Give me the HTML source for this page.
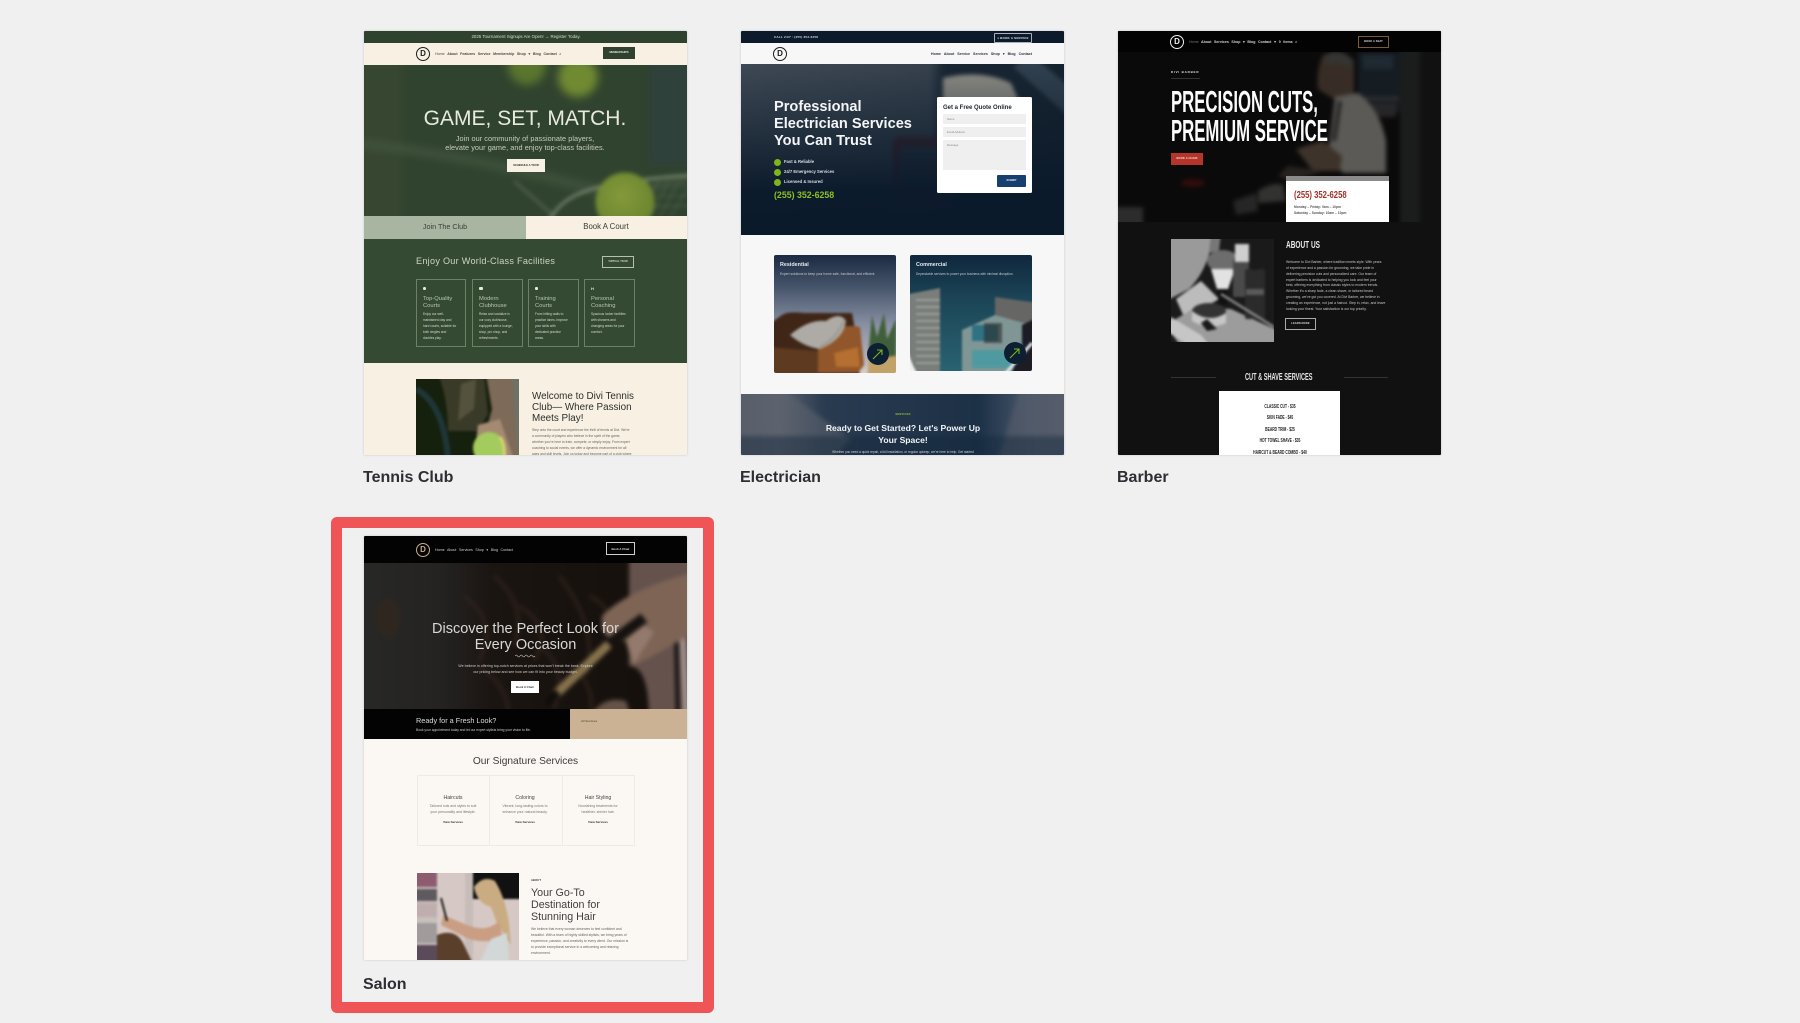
<!DOCTYPE html>
<html lang="en"><head><meta charset="utf-8"><title>Layouts</title>
<style>
html,body{margin:0;padding:0;background:#f0f0f1;width:1800px;height:1023px;overflow:hidden;font-family:"Liberation Sans",sans-serif}
.card{position:absolute;width:323px;height:424px;overflow:hidden;filter:blur(.35px);box-shadow:0 0 2px rgba(0,0,0,.18);border-radius:1px}
.b{position:absolute}
.t{position:absolute;white-space:nowrap;line-height:0}
.c{transform:translateX(-50%)}
.l{position:absolute;font:bold 16px "Liberation Sans",sans-serif;color:#2d2d33;line-height:20px;white-space:nowrap}
svg{position:absolute;display:block}
.ph{position:absolute;overflow:hidden}
.logo{position:absolute;width:14px;height:14px;box-sizing:border-box;border:1.4px solid;border-radius:50%;text-align:center;font:bold 8px/11.5px "Liberation Sans",sans-serif}
.nar{transform-origin:0 50%;font-weight:bold}
.navt{font-size:3.6px}
</style></head><body>

<!-- TENNIS -->
<div class="card" style="left:364px;top:31px;background:#f7f0e3">
 <div class="b" style="left:0;top:0;width:323px;height:12px;background:#2f4230"></div>
 <div class="t c" style="left:162px;top:6px;font-size:4.4px;color:#d8dccb">2025 Tournament Signups Are Open! → Register Today.</div>
 <div class="logo" style="left:52px;top:16px;color:#1d1d1d;border-color:#1d1d1d">D</div>
 <div class="t navt" style="left:71px;top:23px;color:#4a4a40;word-spacing:1.6px">Home <b>About Features Service Membership Shop ▾ Blog Contact ⌕</b></div>
 <div class="b" style="left:239px;top:16px;width:32px;height:12px;background:#2f4230"></div>
 <div class="t c" style="left:255px;top:22px;font-size:2.6px;font-weight:bold;color:#dfe3d3">MEMBERSHIPS</div>
 <div class="ph" style="left:0;top:34px;width:323px;height:151px">
 <svg style="left:-10px;top:-10px;filter:blur(2px)" width="343" height="171" viewBox="-10 24 343 171">
  <defs><filter id="f1" x="-50%" y="-50%" width="200%" height="200%"><feGaussianBlur stdDeviation="4"/></filter>
  <radialGradient id="bg1" cx=".45" cy=".4" r=".6"><stop offset="0" stop-color="#84993a"/><stop offset="1" stop-color="#6a8430"/></radialGradient></defs>
  <rect x="-10" y="24" width="343" height="171" fill="#30432e"/>
  <rect x="-10" y="24" width="50" height="171" fill="#3a4a33" opacity=".6" filter="url(#f1)"/>
  <rect x="285" y="24" width="48" height="110" fill="#2e4044" opacity=".6" filter="url(#f1)"/>
  <g filter="url(#f1)"><circle cx="163" cy="35" r="19" fill="#5a742e"/><circle cx="214" cy="46" r="20" fill="#6f8a33"/></g>
  <path d="M-10 112 C70 120 140 135 205 152 C250 164 250 160 333 148" stroke="#4a5c44" stroke-width="8" fill="none" filter="url(#f1)" opacity=".7"/>
  <g fill="none" stroke="#8e9b85" stroke-width="2"><path d="M185 190 C200 160 235 150 333 144"/><path d="M150 150 L190 185" opacity=".45"/></g>
  <g stroke="#74857a" stroke-width=".7" opacity=".7"><path d="M285 150 L265 188M295 150 L275 188M305 150 L285 188M315 150 L295 188M325 155 L305 188M278 165 L333 165M284 175 L333 175"/></g>
  <circle cx="261" cy="171" r="29.5" fill="url(#bg1)"/>
 </svg></div>
 <div class="t c" style="left:161px;top:88px;font-size:21px;color:#e8eae0">GAME, SET, MATCH.</div>
 <div class="t c" style="left:161px;top:108px;font-size:7.3px;color:#c8cdbb;letter-spacing:.05px">Join our community of passionate players,</div>
 <div class="t c" style="left:161px;top:117px;font-size:7.3px;color:#c8cdbb;letter-spacing:.05px">elevate your game, and enjoy top-class facilities.</div>
 <div class="b" style="left:143px;top:128px;width:38px;height:13px;background:#f7f0e3"></div>
 <div class="t c" style="left:162px;top:135px;font-size:2.7px;font-weight:bold;color:#2a2a2a">SCHEDULE A TOUR</div>
 <div class="b" style="left:0;top:185px;width:161.5px;height:23px;background:#a8b5a0"></div>
 <div class="t c" style="left:81px;top:195.5px;font-size:7.2px;color:#3a4236">Join The Club</div>
 <div class="t c" style="left:242px;top:195.5px;font-size:7.8px;color:#3a3a36">Book A Court</div>
 <div class="b" style="left:0;top:208px;width:323px;height:124px;background:#344a32"></div>
 <div class="t" style="left:52px;top:229.5px;font-size:9.1px;letter-spacing:.28px;color:#cfd4c0">Enjoy Our World-Class Facilities</div>
 <div class="b" style="left:238px;top:225px;width:32px;height:12px;box-sizing:border-box;border:.8px solid #b7c0aa"></div>
 <div class="t c" style="left:254px;top:231px;font-size:2.6px;font-weight:bold;color:#d5d9c9">VIRTUAL TOUR</div>

 <div class="b" style="left:52px;top:248px;width:50px;height:68px;box-sizing:border-box;border:.7px solid #6f8064"></div>
 <div class="b" style="left:108px;top:248px;width:51px;height:68px;box-sizing:border-box;border:.7px solid #6f8064"></div>
 <div class="b" style="left:164px;top:248px;width:51px;height:68px;box-sizing:border-box;border:.7px solid #6f8064"></div>
 <div class="b" style="left:220px;top:248px;width:51px;height:68px;box-sizing:border-box;border:.7px solid #6f8064"></div>
 <div class="b" style="left:59px;top:256px;width:2.5px;height:2.5px;background:#e6e8da;border-radius:50%"></div>
 <div class="b" style="left:115px;top:256px;width:4px;height:3px;background:#e6e8da;border-radius:1px"></div>
 <div class="b" style="left:171px;top:256px;width:3px;height:3px;background:#e6e8da;border-radius:1px"></div>
 <div class="t" style="left:227px;top:257.5px;font-size:4px;font-weight:bold;color:#e6e8da">H</div>
 <div style="position:absolute;left:0;top:0;color:#bcc4ac;font-size:5.8px">
  <div class="t" style="left:59px;top:268px">Top-Quality</div><div class="t" style="left:59px;top:275px">Courts</div>
  <div class="t" style="left:115px;top:268px">Modern</div><div class="t" style="left:115px;top:275px">Clubhouse</div>
  <div class="t" style="left:171px;top:268px">Training</div><div class="t" style="left:171px;top:275px">Courts</div>
  <div class="t" style="left:227px;top:268px">Personal</div><div class="t" style="left:227px;top:275px">Coaching</div>
 </div>
 <div style="position:absolute;left:0;top:0;color:#d6dbc9;font-size:3.2px">
  <div class="t" style="left:59px;top:283px">Enjoy our well-</div><div class="t" style="left:59px;top:289px">maintained clay and</div><div class="t" style="left:59px;top:295px">hard courts, suitable for</div><div class="t" style="left:59px;top:301px">both singles and</div><div class="t" style="left:59px;top:307px">doubles play.</div>
  <div class="t" style="left:115px;top:283px">Relax and socialize in</div><div class="t" style="left:115px;top:289px">our cozy clubhouse,</div><div class="t" style="left:115px;top:295px">equipped with a lounge,</div><div class="t" style="left:115px;top:301px">shop, pro shop, and</div><div class="t" style="left:115px;top:307px">refreshments.</div>
  <div class="t" style="left:171px;top:283px">From hitting walls to</div><div class="t" style="left:171px;top:289px">practice lanes, improve</div><div class="t" style="left:171px;top:295px">your skills with</div><div class="t" style="left:171px;top:301px">dedicated practice</div><div class="t" style="left:171px;top:307px">areas.</div>
  <div class="t" style="left:227px;top:283px">Spacious locker facilities</div><div class="t" style="left:227px;top:289px">with showers and</div><div class="t" style="left:227px;top:295px">changing areas for your</div><div class="t" style="left:227px;top:301px">comfort.</div>
 </div>
 <div class="ph" style="left:52px;top:348px;width:103px;height:76px">
 <svg style="left:-5px;top:-5px;filter:blur(1.3px)" width="113" height="86" viewBox="-5 -5 113 86">
  <rect x="-5" y="-5" width="113" height="86" fill="#15200d"/>
  <rect x="96" y="-5" width="12" height="86" fill="#6f7166"/>
  <path d="M22 -5 L68 -5 L72 35 L62 52 L32 52 Q32 20 22 -5Z" fill="#3a3a28"/>
  <path d="M45 5 L60 0 L58 30 L42 42Z" fill="#54523c"/>
  <path d="M70 -5 L96 -5 L100 55 L103 81 L88 81 L72 45 L76 30Z" fill="#7d6a58"/>
  <path d="M0 10 Q28 25 32 81" stroke="#1f3638" stroke-width="6" fill="none"/>
  <path d="M62 46 L84 40 L98 81 L58 81Z" fill="#a58a72"/>
  <circle cx="73" cy="69" r="16" fill="#a4cb5e"/>
  <path d="M84 58 Q90 66 88 81" stroke="#d8d66e" stroke-width="3" fill="none"/>
 </svg></div>
 <div style="position:absolute;left:0;top:0;color:#2d2f2b;font-size:9.85px">
  <div class="t" style="left:168px;top:366px">Welcome to Divi Tennis</div><div class="t" style="left:168px;top:377px">Club— Where Passion</div><div class="t" style="left:168px;top:387.5px">Meets Play!</div>
 </div>
 <div style="position:absolute;left:0;top:0;color:#66665c;font-size:3.3px">
  <div class="t" style="left:168px;top:399px">Step onto the court and experience the thrill of tennis at Divi. We're</div>
  <div class="t" style="left:168px;top:405px">a community of players who believe in the spirit of the game,</div>
  <div class="t" style="left:168px;top:411px">whether you're here to train, compete, or simply enjoy. From expert</div>
  <div class="t" style="left:168px;top:417px">coaching to social events, we offer a dynamic environment for all</div>
  <div class="t" style="left:168px;top:423px">ages and skill levels. Join us today and become part of a club where</div>
 </div>
</div>
<div class="l" style="left:363px;top:468px">Tennis Club</div>

<!-- ELECTRICIAN -->
<div class="card" style="left:741px;top:31px;background:#f7f7f8">
 <div class="b" style="left:0;top:0;width:323px;height:12px;background:#0c1a2c"></div>
 <div class="t" style="left:33px;top:5.5px;font-size:3.1px;font-weight:bold;color:#d8dde2;letter-spacing:.2px">CALL 24/7 : (255) 352-6258</div>
 <div class="b" style="left:253px;top:1.5px;width:38px;height:10px;box-sizing:border-box;border:.8px solid #a7b2bd;border-radius:1px"></div>
 <div class="t c" style="left:272px;top:6.5px;font-size:3px;font-weight:bold;color:#dfe3e7;letter-spacing:.2px">♦ BOOK A SERVICE</div>
 <div class="logo" style="left:32px;top:16px;color:#1a1a1a;border-color:#1a1a1a">D</div>
 <div class="t navt" style="right:32px;top:23px;color:#2c3440;font-weight:bold;word-spacing:2px">Home About Service Services Shop ▾ Blog Contact</div>
 <div class="ph" style="left:0;top:33px;width:323px;height:171px">
 <svg style="left:-10px;top:-10px;filter:blur(2px)" width="343" height="191" viewBox="-10 23 343 191">
  <defs>
  <linearGradient id="g2" x1="0" y1="0" x2="1" y2="0"><stop offset="0" stop-color="#434d58"/><stop offset=".58" stop-color="#39444f"/><stop offset=".62" stop-color="#1a2634"/><stop offset="1" stop-color="#17242f"/></linearGradient>
  <linearGradient id="g3" x1="0" y1="0" x2="0" y2="1"><stop offset="0" stop-color="#0b1a2b" stop-opacity="0"/><stop offset=".72" stop-color="#0b1a2b" stop-opacity=".98"/><stop offset="1" stop-color="#0b1a2b"/></linearGradient></defs>
  <rect x="-10" y="23" width="343" height="191" fill="url(#g2)"/>
  <path d="M202 47 Q240 38 270 52 L280 75 L202 70Z" fill="#9a978d"/>
  <path d="M272 36 L333 90 L333 60 L290 23Z" fill="#344352"/>
  <rect x="152" y="106" width="60" height="72" rx="6" fill="#47262c"/>
  <rect x="160" y="116" width="38" height="42" fill="#2c3843"/>
  <rect x="-10" y="23" width="343" height="191" fill="url(#g3)"/>
 </svg></div>
 <div style="position:absolute;left:0;top:0;color:#f4f5f6;font-size:14.6px;font-weight:bold">
  <div class="t" style="left:33px;top:75.5px">Professional</div><div class="t" style="left:33px;top:92.5px">Electrician Services</div><div class="t" style="left:33px;top:110px">You Can Trust</div>
 </div>
 <div class="b" style="left:33px;top:127.5px;width:7px;height:7px;border-radius:50%;background:#7fb51a"></div>
 <div class="b" style="left:33px;top:137.5px;width:7px;height:7px;border-radius:50%;background:#7fb51a"></div>
 <div class="b" style="left:33px;top:147.5px;width:7px;height:7px;border-radius:50%;background:#7fb51a"></div>
 <div style="position:absolute;left:0;top:0;color:#d9dde2;font-size:4.2px;font-weight:bold">
  <div class="t" style="left:43px;top:131px">Fast &amp; Reliable</div><div class="t" style="left:43px;top:141px">24/7 Emergency Services</div><div class="t" style="left:43px;top:151px">Licensed &amp; Insured</div>
 </div>
 <div class="t" style="left:33px;top:164px;font-size:8.8px;font-weight:bold;color:#8dbf1f">(255) 352-6258</div>
 <div class="b" style="left:196px;top:66px;width:95px;height:96px;background:#fff;border-radius:1.5px"></div>
 <div class="t" style="left:202px;top:76.5px;font-size:6px;font-weight:bold;color:#1d2530">Get a Free Quote Online</div>
 <div class="b" style="left:202px;top:83px;width:83px;height:10px;background:#efefef"></div>
 <div class="b" style="left:202px;top:96px;width:83px;height:10px;background:#efefef"></div>
 <div class="b" style="left:202px;top:109px;width:83px;height:30px;background:#efefef"></div>
 <div style="position:absolute;left:0;top:0;color:#8a8a8a;font-size:2.8px">
  <div class="t" style="left:206px;top:88px">Name</div><div class="t" style="left:206px;top:101px">Email Address</div><div class="t" style="left:206px;top:114px">Message</div>
 </div>
 <div class="b" style="left:256px;top:144px;width:29px;height:12px;background:#17406f;border-radius:1px"></div>
 <div class="t c" style="left:270.5px;top:150px;font-size:2.7px;font-weight:bold;color:#e5e9ee">SUBMIT</div>

 <div class="ph" style="left:33px;top:224px;width:122px;height:118px;border-radius:2px">
 <svg style="left:-6px;top:-6px;filter:blur(1.3px)" width="134" height="130" viewBox="-6 -6 134 130">
  <defs><linearGradient id="g4" x1="0" y1="0" x2="0" y2="1"><stop offset="0" stop-color="#13233a"/><stop offset=".3" stop-color="#48566c"/><stop offset=".6" stop-color="#8c93a6"/><stop offset=".85" stop-color="#b5b2b8"/><stop offset="1" stop-color="#e4dcd4"/></linearGradient></defs>
  <rect x="-6" y="-6" width="134" height="130" fill="url(#g4)"/>
  <path d="M8 60 Q14 56 30 58 L78 58 L82 80 L86 124 L-6 124 L-6 70Z" fill="#3f2617"/>
  <path d="M-6 92 L44 96 L44 124 L-6 124Z" fill="#5e3a20"/>
  <path d="M44 92 Q60 66 86 72 L90 110 L84 118 L44 118Z" fill="#91562a"/>
  <path d="M60 98 L84 92 L86 112 L62 112Z" fill="#b56f30"/>
  <path d="M16 80 Q35 64 52 66 Q66 56 72 66 Q70 84 46 94 Q30 92 16 80Z" fill="#aeaaa5"/>
  <path d="M46 92 Q62 84 70 66" stroke="#8d8880" stroke-width="1" fill="none"/>
  <path d="M95 92 L98 60 L103 82 L110 58 L113 84 L122 64 L122 104 L95 104Z" fill="#3f5f3a"/>
  <path d="M95 104 L128 100 L128 124 L93 124Z" fill="#c2a268"/>
 </svg></div>
 <div class="b" style="left:126px;top:312px;width:22px;height:22px;border-radius:50%;background:#0c1f33"></div>
 <svg style="left:126px;top:312px" width="22" height="22" viewBox="0 0 22 22"><path d="M6 16 L15 7 M10 7 H15 V12" stroke="#7fb51a" stroke-width="1.1" fill="none"/></svg>
 <div class="ph" style="left:169px;top:224px;width:122px;height:116px;border-radius:2px">
 <svg style="left:-6px;top:-6px;filter:blur(1.1px)" width="134" height="128" viewBox="-6 -6 134 128">
  <defs><linearGradient id="g5" x1="0" y1="0" x2="0" y2="1"><stop offset="0" stop-color="#0f2339"/><stop offset=".4" stop-color="#1c4658"/><stop offset="1" stop-color="#2a6573"/></linearGradient></defs>
  <rect x="-6" y="-6" width="134" height="128" fill="url(#g5)"/>
  <path d="M-6 40 L30 33 L30 122 L-6 122Z" fill="#7a7e7b"/>
  <path d="M-6 80 Q0 110 10 122 L-6 122Z" fill="#f0f0ee"/>
  <g stroke="#d2d2c8" stroke-width="1.3" opacity=".55"><path d="M6 45H30M6 52H30M6 59H30M6 66H30M6 73H30M6 80H30M6 87H30M6 94H30M6 101H30M6 108H30"/></g>
  <path d="M52 75 L85 60 L128 65 L128 122 L52 122Z" fill="#7f9695"/>
  <path d="M85 42 L128 48 L128 72 L85 60Z" fill="#666664"/>
  <rect x="62" y="70" width="26" height="16" fill="#2f7283"/><rect x="74" y="68" width="18" height="20" fill="#2b2b2b" opacity=".6"/><rect x="62" y="95" width="50" height="18" fill="#4f9aa0"/>
  <path d="M112 70 L128 62 L128 122 L100 122 L112 92Z" fill="#1b1c24"/>
  <path d="M96 118 L122 88" stroke="#e8e8e4" stroke-width="3"/>
 </svg></div>
 <div class="b" style="left:263px;top:311px;width:22px;height:22px;border-radius:50%;background:#0c1f33"></div>
 <svg style="left:263px;top:311px" width="22" height="22" viewBox="0 0 22 22"><path d="M6 16 L15 7 M10 7 H15 V12" stroke="#7fb51a" stroke-width="1.1" fill="none"/></svg>
 <div class="t" style="left:39px;top:234px;font-size:5.4px;font-weight:bold;color:#e6e9ee">Residential</div>
 <div class="t" style="left:39px;top:243px;font-size:3.3px;color:#c2c8d0">Expert solutions to keep your home safe, functional, and efficient.</div>
 <div class="t" style="left:175px;top:234px;font-size:5.4px;font-weight:bold;color:#e6e9ee">Commercial</div>
 <div class="t" style="left:175px;top:243px;font-size:3.2px;color:#c2c8d0">Dependable services to power your business with minimal disruption.</div>
 <div class="ph" style="left:0;top:363px;width:323px;height:61px">
 <svg style="left:-10px;top:-10px;filter:blur(2.5px)" width="343" height="81" viewBox="-10 -10 343 81">
  <defs><linearGradient id="g6" x1="0" y1="0" x2="1" y2="0"><stop offset="0" stop-color="#4c5360"/><stop offset=".14" stop-color="#5c626e"/><stop offset=".27" stop-color="#2a3b50"/><stop offset=".72" stop-color="#1c3046"/><stop offset=".87" stop-color="#47566a"/><stop offset="1" stop-color="#565c68"/></linearGradient></defs>
  <rect x="-10" y="-10" width="343" height="81" fill="url(#g6)"/>
  <path d="M35 -10 L110 45 L85 71 L-10 71 L-10 -10Z" fill="#5f6570" opacity=".55"/>
  <path d="M280 -10 L255 71 L333 71 L333 -10Z" fill="#585e6a" opacity=".6"/>
  <rect x="-10" y="42" width="343" height="29" fill="#14273c" opacity=".45"/>
 </svg></div>
 <div class="t c" style="left:162px;top:384px;font-size:2.7px;font-weight:bold;color:#9ac02a;letter-spacing:.2px">SERVICES</div>
 <div class="t c" style="left:162px;top:397px;font-size:8.6px;font-weight:bold;color:#f3f4f5">Ready to Get Started? Let's Power Up</div>
 <div class="t c" style="left:162px;top:408.5px;font-size:8.6px;font-weight:bold;color:#f3f4f5">Your Space!</div>
 <div class="t c" style="left:162px;top:421px;font-size:3.2px;color:#cdd2d8">Whether you need a quick repair, a full installation, or regular upkeep, we're here to help. Get started</div>
</div>
<div class="l" style="left:740px;top:468px">Electrician</div>

<!-- BARBER -->
<div class="card" style="left:1118px;top:31px;background:#111">
 <div class="ph" style="left:0;top:21px;width:323px;height:170px">
 <svg style="left:-10px;top:-10px;filter:blur(2px)" width="343" height="190" viewBox="-10 11 343 190">
  <rect x="-10" y="11" width="343" height="190" fill="#0b0a0a"/>
  <rect x="282" y="11" width="20" height="190" fill="#1b1c1c"/>
  <rect x="302" y="11" width="31" height="190" fill="#111"/>
  <rect x="240" y="21" width="42" height="60" fill="#151c22"/>
  <rect x="245" y="24" width="30" height="14" fill="#1f2932"/>
  <rect x="245" y="66" width="36" height="3" fill="#333"/>
  <rect x="250" y="72" width="28" height="14" fill="#262628"/>
  <path d="M205 24 Q225 18 236 30 L236 62 Q232 72 222 72 L200 58 Q198 40 205 24Z" fill="#372d26"/>
  <path d="M208 23 Q224 16 236 30 L232 36 Q218 30 208 34Z" fill="#343432"/>
  <path d="M217 66 L240 62 Q262 78 268 110 L268 142 L225 142 L210 125Z" fill="#5b5a56"/>
  <path d="M222 70 L216 110" stroke="#222" stroke-width="4"/>
  <path d="M178 118 L205 110 L224 125 L222 140 L195 140Z" fill="#3e332b"/>
  <path d="M170 135 L205 140 L175 150 L160 145Z" fill="#26221f"/>
  <path d="M140 160 Q155 150 165 154 L168 170 L140 172Z" fill="#323230"/>
  <rect x="-10" y="176" width="35" height="25" fill="#2c2c2c"/>
  <path d="M115 170 L138 162 L140 180 L118 184Z" fill="#262626"/>
  <ellipse cx="75" cy="152" rx="12" ry="4" fill="#300d0b"/>
 </svg></div>
 <div class="b" style="left:0;top:0;width:323px;height:21px;background:#030303"></div>
 <div class="logo" style="left:52px;top:4px;color:#f2f2f2;border-color:#f2f2f2">D</div>
 <div class="t navt" style="left:71px;top:11px;color:#d4d4d4;font-weight:bold;word-spacing:1.6px"><span style="color:#777;font-weight:normal">Home</span> About Services Shop ▾ Blog Contact ♥ 0 items ⌕</div>
 <div class="b" style="left:240px;top:5px;width:31px;height:12px;box-sizing:border-box;border:.8px solid #7a5c3a"></div>
 <div class="t c" style="left:255.5px;top:11px;font-size:2.6px;font-weight:bold;color:#dcdcdc;letter-spacing:.1px">BOOK A SEAT</div>
 <div class="t" style="left:53px;top:40.5px;font-size:3px;font-weight:bold;color:#e8e8e8;letter-spacing:.8px">DIVI BARBER</div>
 <div class="b" style="left:53px;top:47px;width:29px;height:.6px;background:#333"></div>
 <div class="t nar" style="left:53px;top:71px;font-size:31px;color:#fbfbfb;transform:scaleX(.54)">PRECISION CUTS,</div>
 <div class="t nar" style="left:53px;top:99.5px;font-size:31px;color:#fbfbfb;transform:scaleX(.54)">PREMIUM SERVICE</div>
 <div class="b" style="left:53px;top:122px;width:32px;height:12px;background:#b5352a"></div>
 <div class="t c" style="left:69px;top:128px;font-size:2.7px;font-weight:bold;color:#f0dcd8;letter-spacing:.1px">BOOK A CHAIR</div>
 <div class="b" style="left:168px;top:145px;width:103px;height:46px;background:#fff"></div>
 <div class="b" style="left:168px;top:145px;width:103px;height:4.5px;background:#8a8a8a"></div>
 <div class="t nar" style="left:176px;top:164.5px;font-size:10px;color:#a3332a;transform:scaleX(.77)">(255) 352-6258</div>
 <div class="t" style="left:176px;top:175.5px;font-size:3.3px;font-weight:bold;color:#555">Monday – Friday: 9am – 10pm</div>
 <div class="t" style="left:176px;top:181.5px;font-size:3.3px;font-weight:bold;color:#555">Saturday – Sunday: 10am – 10pm</div>

 <div class="ph" style="left:53px;top:208px;width:103px;height:103px">
 <svg style="left:-5px;top:-5px;filter:blur(1.2px)" width="113" height="113" viewBox="-5 -5 113 113">
  <rect x="-5" y="-5" width="113" height="113" fill="#1a1a1a"/>
  <path d="M-5 -5 L42 -5 Q38 30 18 50 L-5 62Z" fill="#9a9a9a"/>
  <path d="M40 -5 L50 -5 L48 12 L38 14Z" fill="#777"/>
  <path d="M5 60 L30 42 L48 60 L14 80Z" fill="#bcbcbc"/>
  <path d="M-5 86 L25 68 L60 70 L108 92 L108 108 L10 108Z" fill="#9c9c9c"/>
  <path d="M0 78 L-5 92 L20 108 L40 108 L30 96Z" fill="#c6c6c6"/>
  <ellipse cx="52" cy="22" rx="16" ry="11" fill="#6d6d6d"/>
  <path d="M40 30 L64 30 L57 50 L46 50Z" fill="#e2e2e2"/>
  <rect x="47" y="50" width="9" height="16" fill="#111"/>
  <rect x="62" y="20" width="16" height="38" fill="#4a4a4a"/><rect x="64" y="5" width="14" height="18" fill="#cfcfcf"/>
  <rect x="74" y="30" width="20" height="50" rx="2" fill="#2b2b2b"/><rect x="81" y="15" width="6" height="16" fill="#1a1a1a"/>
  <rect x="75" y="50" width="18" height="6" fill="#5a5a5a"/>
  <ellipse cx="38" cy="72" rx="17" ry="8" fill="#333"/><path d="M21 72 Q38 85 55 74 L55 84 Q38 92 21 82Z" fill="#c6c6c6"/>
  <path d="M50 55 L103 88" stroke="#8a8a8a" stroke-width="2.5"/>
  <path d="M36 80 L46 90 L36 92 L30 84Z" fill="#1a1a1a"/>
 </svg></div>
 <div class="t nar" style="left:168px;top:214px;font-size:10.5px;color:#e8e8e8;transform:scaleX(.62)">ABOUT US</div>
 <div style="position:absolute;left:0;top:0;color:#c6c6c6;font-size:3.4px">
  <div class="t" style="left:168px;top:231px">Welcome to Divi Barber, where tradition meets style. With years</div>
  <div class="t" style="left:168px;top:237px">of experience and a passion for grooming, we take pride in</div>
  <div class="t" style="left:168px;top:242.6px">delivering precision cuts and personalized care. Our team of</div>
  <div class="t" style="left:168px;top:248.5px">expert barbers is dedicated to helping you look and feel your</div>
  <div class="t" style="left:168px;top:254.3px">best, offering everything from classic styles to modern trends.</div>
  <div class="t" style="left:168px;top:260.2px">Whether it's a sharp fade, a clean shave, or tailored beard</div>
  <div class="t" style="left:168px;top:266px">grooming, we've got you covered. At Divi Barber, we believe in</div>
  <div class="t" style="left:168px;top:271.8px">creating an experience, not just a haircut. Step in, relax, and leave</div>
  <div class="t" style="left:168px;top:277.6px">looking your finest. Your satisfaction is our top priority.</div>
 </div>
 <div class="b" style="left:167px;top:287px;width:31px;height:12px;box-sizing:border-box;border:.8px solid #aaa"></div>
 <div class="t c" style="left:182.5px;top:293px;font-size:2.6px;font-weight:bold;color:#d8d8d8;letter-spacing:.1px">LEARN MORE</div>
 <div class="b" style="left:53px;top:346px;width:45px;height:.7px;background:#333"></div>
 <div class="b" style="left:226px;top:346px;width:44px;height:.7px;background:#333"></div>
 <div class="t nar" style="left:127px;top:346px;font-size:10.5px;color:#e4e4e4;transform:scaleX(.535)">CUT &amp; SHAVE SERVICES</div>
 <div class="b" style="left:101px;top:360px;width:121px;height:64px;background:#fff"></div>
 <div class="t c" style="left:162px;top:375.5px;font-size:5.6px;font-weight:bold;color:#222;transform:translateX(-50%) scaleX(.6)">CLASSIC CUT - $35</div>
 <div class="t c" style="left:162px;top:387px;font-size:5.6px;font-weight:bold;color:#222;transform:translateX(-50%) scaleX(.6)">SKIN FADE - $45</div>
 <div class="t c" style="left:162px;top:398.5px;font-size:5.6px;font-weight:bold;color:#222;transform:translateX(-50%) scaleX(.6)">BEARD TRIM - $25</div>
 <div class="t c" style="left:162px;top:410px;font-size:5.6px;font-weight:bold;color:#222;transform:translateX(-50%) scaleX(.6)">HOT TOWEL SHAVE - $35</div>
 <div class="t c" style="left:162px;top:421.5px;font-size:5.6px;font-weight:bold;color:#222;transform:translateX(-50%) scaleX(.6)">HAIRCUT &amp; BEARD COMBO - $40</div>
</div>
<div class="l" style="left:1117px;top:468px">Barber</div>

<!-- HIGHLIGHT FRAME -->
<div class="b" style="left:331px;top:517px;width:383px;height:496px;box-sizing:border-box;border:11px solid #ef5556;border-radius:6px;background:#f0f0f1"></div>

<!-- SALON -->
<div class="card" style="left:364px;top:536px;background:#fbf8f3">
 <div class="ph" style="left:0;top:27px;width:323px;height:146px">
 <svg style="left:-10px;top:-10px;filter:blur(2px)" width="343" height="166" viewBox="-10 17 343 166">
  <defs><linearGradient id="sh" x1="0" y1="0" x2="1" y2="0"><stop offset="0" stop-color="#282826"/><stop offset=".25" stop-color="#242322"/><stop offset=".4" stop-color="#1b1512"/><stop offset=".85" stop-color="#15100c"/><stop offset="1" stop-color="#15100c"/></linearGradient></defs>
  <rect x="-10" y="17" width="343" height="166" fill="url(#sh)"/>
  <ellipse cx="24" cy="82" rx="12" ry="20" fill="#2f2620"/>
  <path d="M265 17 L333 17 L333 183 L285 183 Q285 130 265 130Z" fill="#65524d"/>
  <path d="M312 88 L314 183" stroke="#0e0c0b" stroke-width="4"/>
  <path d="M318 88 L322 183" stroke="#a69994" stroke-width="5"/>
  <g stroke="#36261d" stroke-width="2.2" fill="none"><path d="M100 60 Q135 85 115 125M130 40 Q165 70 150 110M155 70 Q190 90 170 125M175 110 Q205 130 190 173M195 40 Q235 90 222 140M115 130 Q145 150 145 183M225 60 Q250 70 245 100M205 130 Q235 150 225 183"/></g>
  <path d="M238 80 Q262 55 323 38 L333 36 L333 95 L285 122 L268 130 L262 105 Q245 108 238 92Z" fill="#7d6455"/>
  <path d="M262 105 L278 88 L290 96 L270 128Z" fill="#947a6c"/>
  <path d="M230 175 Q242 160 262 165 L268 183 L225 183Z" fill="#665347"/>
  <path d="M192 158 L245 108" stroke="#85724c" stroke-width="9"/>
  <path d="M182 168 L194 156" stroke="#100d0b" stroke-width="7"/>
  <path d="M245 108 L280 82" stroke="#15120f" stroke-width="11"/>
 </svg></div>
 <div class="b" style="left:0;top:0;width:323px;height:27px;background:#030303"></div>
 <div class="logo" style="left:52px;top:7px;color:#c8ad84;border-color:#c8ad84">D</div>
 <div class="t navt" style="left:71px;top:14px;color:#d0d0d0;word-spacing:1.6px">Home About Services Shop ▾ Blog Contact</div>
 <div class="b" style="left:242px;top:6px;width:29px;height:12.5px;box-sizing:border-box;border:.8px solid #cfcfcf"></div>
 <div class="t c" style="left:256.5px;top:12.5px;font-size:2.9px;color:#dedede;font-weight:bold">Book A Chair</div>
 <div class="t c" style="left:161.5px;top:92.5px;font-size:14.5px;color:#d8d8d6">Discover the Perfect Look for</div>
 <div class="t c" style="left:161.5px;top:108.5px;font-size:14.5px;color:#d8d8d6">Every Occasion</div>
 <svg style="left:151px;top:118px" width="22" height="4" viewBox="0 0 22 4"><path d="M0 2 q1.25 -2 2.5 0 t2.5 0 t2.5 0 t2.5 0 t2.5 0 t2.5 0 t2.5 0 t2.5 0" stroke="#d8d2c8" stroke-width=".6" fill="none"/></svg>
 <div class="t c" style="left:161.5px;top:130px;font-size:3.6px;color:#cfcfcf">We believe in offering top-notch services at prices that won't break the bank. Explore</div>
 <div class="t c" style="left:161.5px;top:136px;font-size:3.6px;color:#cfcfcf">our pricing below and see how we can fit into your beauty budget.</div>
 <div class="b" style="left:147px;top:145px;width:28px;height:12px;background:#fff"></div>
 <div class="t c" style="left:161px;top:151px;font-size:2.9px;font-weight:bold;color:#333">Book A Chair</div>
 <div class="b" style="left:0;top:173px;width:206px;height:30px;background:#030303"></div>
 <div class="b" style="left:206px;top:173px;width:117px;height:30px;background:#cbb294"></div>
 <div class="t" style="left:52px;top:184.5px;font-size:7.3px;color:#dcdcdc">Ready for a Fresh Look?</div>
 <div class="t" style="left:52px;top:194px;font-size:3.3px;color:#cfcfcf">Book your appointment today and let our expert stylists bring your vision to life.</div>
 <div class="t" style="left:217px;top:185px;font-size:3.1px;color:#4a4030">All Services</div>
 <div class="t c" style="left:161.5px;top:225.5px;font-size:10.2px;color:#3d3d3d">Our Signature Services</div>
 <div class="b" style="left:53px;top:239px;width:217.5px;height:71px;box-sizing:border-box;border:.8px solid #efebe4"></div>
 <div class="b" style="left:125px;top:239px;width:.8px;height:71px;background:#efebe4"></div>
 <div class="b" style="left:198px;top:239px;width:.8px;height:71px;background:#efebe4"></div>
 <div class="t c" style="left:89px;top:262px;font-size:5.2px;color:#444">Haircuts</div>
 <div class="t c" style="left:161px;top:262px;font-size:5.2px;color:#444">Coloring</div>
 <div class="t c" style="left:234px;top:262px;font-size:5.2px;color:#444">Hair Styling</div>
 <div style="position:absolute;left:0;top:0;color:#77746e;font-size:3.5px">
  <div class="t c" style="left:89px;top:270px">Tailored cuts and styles to suit</div><div class="t c" style="left:89px;top:276px">your personality and lifestyle.</div>
  <div class="t c" style="left:161px;top:270px">Vibrant, long-lasting colors to</div><div class="t c" style="left:161px;top:276px">enhance your natural beauty.</div>
  <div class="t c" style="left:234px;top:270px">Nourishing treatments for</div><div class="t c" style="left:234px;top:276px">healthier, shinier hair.</div>
 </div>
 <div style="position:absolute;left:0;top:0;color:#333;font-size:3px;font-weight:bold">
  <div class="t c" style="left:89px;top:286px">View Services</div><div class="t c" style="left:161px;top:286px">View Services</div><div class="t c" style="left:234px;top:286px">View Services</div>
 </div>
 <div class="ph" style="left:53px;top:337px;width:102px;height:87px">
 <svg style="left:-4px;top:-4px;filter:blur(1px)" width="110" height="95" viewBox="-4 -4 110 95">
  <rect x="-4" y="-4" width="110" height="95" fill="#d6c9c5"/>
  <rect x="-4" y="-4" width="24" height="95" fill="#c8c0bc"/>
  <rect x="-4" y="-4" width="24" height="18" fill="#8d5c70"/><rect x="-4" y="16" width="24" height="12" fill="#5f5a5f"/><rect x="-4" y="30" width="24" height="14" fill="#c0aeae"/><rect x="-4" y="50" width="24" height="20" fill="#a09c9c"/><rect x="-4" y="72" width="24" height="19" fill="#5b4a5a"/>
  <rect x="56" y="-4" width="50" height="30" fill="#111"/>
  <rect x="48" y="-4" width="8" height="95" fill="#c7bcb8"/>
  <path d="M57 14 Q66 2 78 8 Q88 24 92 50 L94 72 L80 50 L74 34 Q60 30 57 14Z" fill="#c9ac82"/>
  <path d="M26 42 L50 52 Q70 60 82 48 L86 66 Q60 72 44 62 L24 52Z" fill="#c99e83"/>
  <path d="M74 66 L90 60 L92 91 L62 91Z" fill="#d2d8d7"/>
  <path d="M20 62 Q38 55 46 70 L56 91 L20 91Z" fill="#5a3f2b"/>
  <path d="M24 25 L30 48" stroke="#1c1c1c" stroke-width="2"/>
 </svg></div>
 <div class="t" style="left:167px;top:345px;font-size:2.7px;font-weight:bold;color:#333;letter-spacing:.1px">ABOUT</div>
 <div style="position:absolute;left:0;top:0;color:#3f3f3f;font-size:10.7px">
  <div class="t" style="left:167px;top:357px">Your Go-To</div><div class="t" style="left:167px;top:369px">Destination for</div><div class="t" style="left:167px;top:381px">Stunning Hair</div>
 </div>
 <div style="position:absolute;left:0;top:0;color:#66635d;font-size:3.4px">
  <div class="t" style="left:167px;top:393px">We believe that every woman deserves to feel confident and</div>
  <div class="t" style="left:167px;top:399px">beautiful. With a team of highly skilled stylists, we bring years of</div>
  <div class="t" style="left:167px;top:405px">experience, passion, and creativity to every client. Our mission is</div>
  <div class="t" style="left:167px;top:411px">to provide exceptional service in a welcoming and relaxing</div>
  <div class="t" style="left:167px;top:417px">environment.</div>
 </div>
</div>
<div class="l" style="left:363px;top:975px">Salon</div>
</body></html>
